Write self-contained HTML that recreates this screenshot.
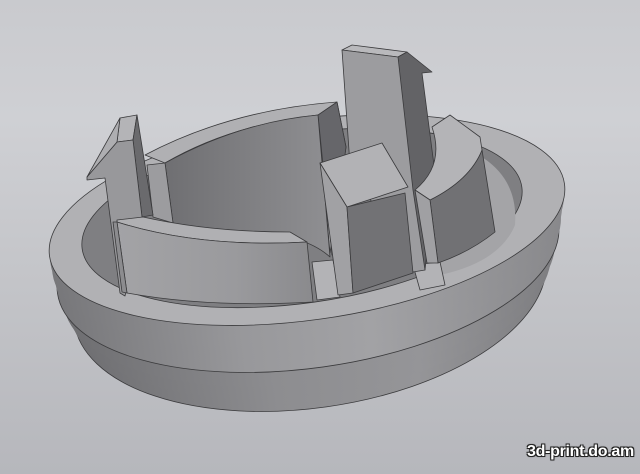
<!DOCTYPE html>
<html><head><style>
html,body{margin:0;padding:0;}
body{width:640px;height:474px;overflow:hidden;background:linear-gradient(180deg,#c9cace 0%,#cfd0d4 25%,#c3c4c8 60%,#b6b7bc 100%);font-family:"Liberation Sans",sans-serif;position:relative;}
svg{position:absolute;left:0;top:0;}
.wm{position:absolute;left:527px;top:443px;font-size:16px;font-weight:bold;color:#fff;letter-spacing:-0.3px;
text-shadow:-1px -1px 0 #222,1px -1px 0 #222,-1px 1px 0 #222,1px 1px 0 #222,0 0 2px #000;}
</style></head><body>
<svg width="640" height="474" viewBox="0 0 640 474">
<defs>
<linearGradient id="wall" x1="0" x2="1" y1="0" y2="0">
<stop offset="0" stop-color="#77777a"/><stop offset="0.35" stop-color="#98989b"/><stop offset="0.6" stop-color="#a2a2a5"/><stop offset="1" stop-color="#88888b"/></linearGradient>
<linearGradient id="wall2" x1="0" x2="1" y1="0" y2="0">
<stop offset="0" stop-color="#6e6e71"/><stop offset="0.4" stop-color="#8d8d90"/><stop offset="0.7" stop-color="#959598"/><stop offset="1" stop-color="#7d7d80"/></linearGradient>
<linearGradient id="back" x1="0" x2="1"><stop offset="0" stop-color="#6f6f72"/><stop offset="1" stop-color="#8f8f92"/></linearGradient>
<linearGradient id="farc" x1="0" x2="1"><stop offset="0" stop-color="#a3a3a6"/><stop offset="0.6" stop-color="#9a9a9d"/><stop offset="1" stop-color="#8a8a8d"/></linearGradient>
</defs>
<g stroke="#3a3a3c" stroke-width="0.8" stroke-linejoin="round">
<!-- base body -->
<ellipse cx="310" cy="290" rx="238" ry="118" transform="rotate(-8 310 290)" fill="url(#wall2)"/>
<g stroke="none" fill="url(#wall2)">
<ellipse cx="310" cy="280" rx="243" ry="116" transform="rotate(-8 310 280)"/>
<ellipse cx="309" cy="270" rx="248" ry="113" transform="rotate(-8 309 270)"/>
</g>
<ellipse cx="308" cy="258" rx="253" ry="110" transform="rotate(-8 308 258)" fill="url(#wall)"/>
<g stroke="none" fill="url(#wall)">
<ellipse cx="308" cy="248" rx="255" ry="107" transform="rotate(-8 308 248)"/>
<ellipse cx="307" cy="238" rx="257" ry="104" transform="rotate(-8 307 238)"/>
<ellipse cx="307" cy="228" rx="259" ry="101" transform="rotate(-8 307 228)"/>
</g>
<ellipse cx="307" cy="220" rx="260" ry="100" transform="rotate(-8 307 220)" fill="#b1b1b4"/>
<ellipse cx="302" cy="218" rx="222" ry="85" transform="rotate(-8 302 218)" fill="#7f7f82"/>
<path d="M440,140 Q520,160 515,225 Q500,262 440,275 L440,150 Z" fill="#a4a4a7" stroke="none"/>
<!-- floor patches -->
<polygon points="312,262 333,260 340,297 317,300" fill="#b3b3b6"/>
<polygon points="413,265 440,262 445,285 420,290" fill="#b3b3b6"/>
<!-- back wall -->
<path d="M145,155 Q230,110 337,102 L346,147 L330,253 L318,115 Q230,125 165,163 Z" fill="#b0b0b3"/>
<polygon points="318,115 337,102 346,147 332,255" fill="#66666a"/>
<path d="M165,163 Q240,122 318,115 L330,257 Q300,230 230,233 Q190,232 173,223 Z" fill="url(#back)"/>
<polygon points="147,165 165,163 173,223 153,217" fill="#9c9c9f"/>
<!-- left arrow tab -->
<polygon points="120,118 137,115 133,140 117,142" fill="#b4b4b7"/>
<polygon points="133,140 137,115 153,215 142,217" fill="#6a6a6d"/>
<polygon points="87,177 117,142 133,140 142,217 125,296 120,293 105,178 87,180" fill="#98989b"/>
<polygon points="87,177 120,118 117,142" fill="#aeaeb1"/>
<!-- front arc wall -->
<path d="M117,220 L143,217 Q210,232 290,232 L307,242 Q200,248 117,222 Z" fill="#b0b0b3"/>
<path d="M117,222 Q200,248 307,242 L313,302 Q210,308 127,293 Z" fill="url(#farc)"/>
<polygon points="113,222 117,222 127,293 122,292" fill="#8c8c8f"/>
<!-- tall plank -->
<polygon points="342,50 352,45 407,52 398,57" fill="#b9b9bc"/>
<polygon points="398,57 407,52 432,72 422,73 435,173 425,270 413,270" fill="#636366"/>
<polygon points="342,50 398,57 413,190 425,270 413,272 350,165" fill="#9c9c9f"/>
<!-- small tab -->
<polygon points="320,163 382,143 408,187 347,207" fill="#b2b2b5"/>
<polygon points="320,163 347,207 353,293 338,295" fill="#a1a1a4"/>
<polygon points="347,207 405,193 413,273 353,293" fill="#727275"/>
<!-- right arc -->
<path d="M430,200 Q470,180 482,150 L495,232 Q470,252 438,263 Z" fill="#717174"/>
<path d="M432,127 L450,115 L480,137 L482,150 Q470,180 430,200 L415,190 Q445,165 432,127 Z" fill="#b4b4b7"/>
<polygon points="415,190 430,200 438,263 427,263" fill="#a0a0a3"/>
</g>
</svg>
<div class="wm">3d-print.do.am</div>
</body></html>
